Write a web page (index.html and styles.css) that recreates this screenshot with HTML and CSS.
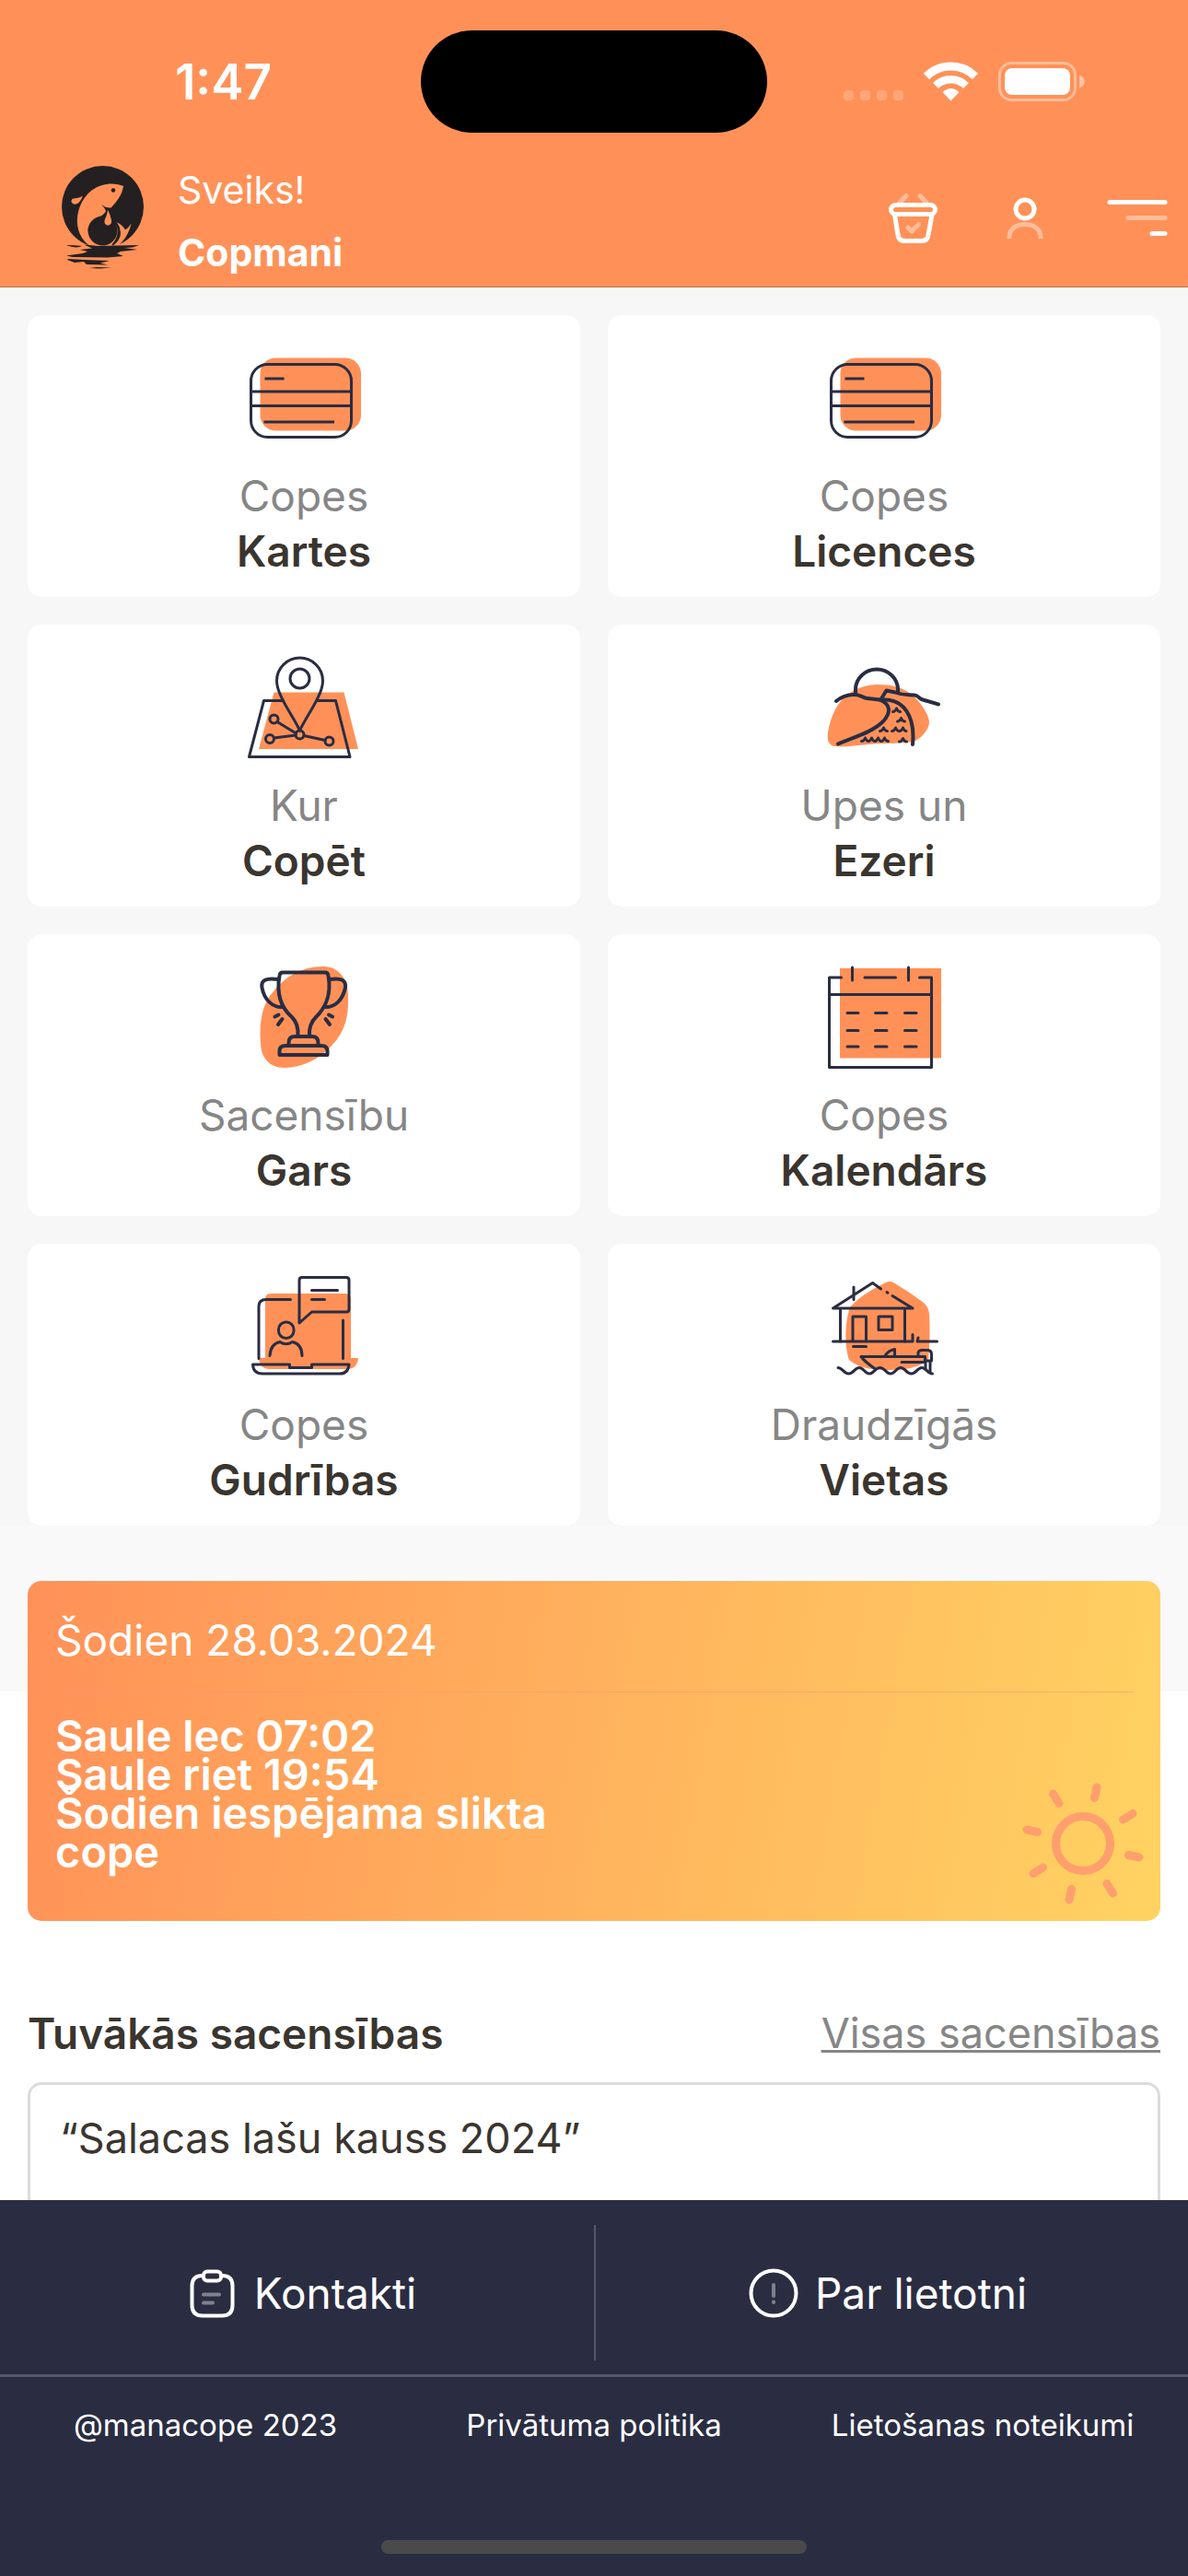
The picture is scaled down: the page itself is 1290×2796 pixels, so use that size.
FILE: index.html
```
<!DOCTYPE html>
<html lang="lv">
<head>
  <meta charset="UTF-8">
  <meta name="viewport" content="width=device-width, initial-scale=1.0">
  <title>Mana Cope</title>
  <link rel="stylesheet" href="styles.css">
</head>
<body>
  <header class="header">
    <div class="status">
      <span class="time">1:47</span>
      <div class="island"></div>
      <svg class="status-icons" viewBox="0 0 262 44" aria-hidden="true">
        <g fill="#fff" opacity=".2">
          <rect x="0" y="31" width="11" height="11" rx="4"/>
          <rect x="18" y="31" width="11" height="11" rx="4"/>
          <rect x="36" y="31" width="11" height="11" rx="4"/>
          <rect x="54" y="31" width="11" height="11" rx="4"/>
        </g>
        <g fill="none" stroke="#fff">
          <path stroke-width="9" d="M90 16A37.500 37.500 0 0 1 143 16"/>
          <path stroke-width="8.500" d="M100 26A23.500 23.500 0 0 1 133 26"/>
        </g>
        <path fill="#fff" d="M116.500 42.500L107.500 33Q116.500 25 125.500 33Z"/>
        <rect x="169.500" y="1.500" width="82" height="40" rx="13" fill="none" stroke="#fff" stroke-width="3" opacity=".4"/>
        <rect x="175" y="7" width="71" height="29" rx="8" fill="#fff"/>
        <path fill="#fff" opacity=".45" d="M256 14.500Q262 17 262 21.500T256 28.500Z"/>
      </svg>
    </div>
    <nav class="nav">
      <svg class="logo" viewBox="0 0 90 112" aria-hidden="true">
        <circle cx="44.500" cy="44.500" r="44.500" fill="#242021"/>
        <path fill="#ff9158" d="M0 86.500H90V90H0Z"/>
        <path fill="#ff9158" d="M67 22C58 18 44 18 32 27C20 37 16 52 17 63C18 74 24 83 31 87H60C66 84 73 74 75.500 62.500Q73 67 69 69.500Q65 63 59.700 61.500C65 68 65 80 54 86C64 75 61 65 57 62C50 50 30 60 28 70C29 60 45 56 48 49Q47 46 43 42Q48 46 53.500 45.500C59 40 66 31 67 22Z"/>
        <circle cx="44.500" cy="70.500" r="16" fill="#242021"/>
        <path fill="#242021" d="M49 50C48 58 30 60 28.500 71L60 71C60 63 55 57 49 50Z"/>
        <path fill="none" stroke="#242021" stroke-width="1.500" d="M60 63C66 72 63 81 55 86"/>
        <path fill="#ff9158" d="M50 48Q49 54 47 58C44 66 55 67 54 59Q53 53 50 48Z"/>
        <path fill="#ff9158" d="M22.700 32.500C18 37 10 33 10.500 39C13 44 20 42 22.700 32.500Z"/>
        <circle cx="56" cy="26.500" r="2.300" fill="#242021"/>
        <g fill="#242021">
          <path d="M5 86Q13 86 22 87Q17 90 6 86.500Z"/>
          <path d="M24 85.500L40 87L84 86L77 88.500L68 89L82 91L64 93L60 95L67 98L50 99.500L12 99L5 97.500L23 95L28 93L20 91L33 89.500Z"/>
          <path d="M7 101L25 102L52 103L42 105.500L50 107.500L27 107L24 104L14 105L6 102Z"/>
          <path d="M30 111L38 110L54 110.500L42 111.500Z"/>
        </g>
      </svg>
      <div class="greeting">
        <span>Sveiks!</span>
        <strong>Copmani</strong>
      </div>
      <div class="actions">
        <button type="button" aria-label="Grozs">
          <svg viewBox="0 0 66 66">
            <path class="faint" d="M18 17L26 8.500M49 17L41 8.500M28 43L32 47L39.500 39.500"/>
            <rect x="9.500" y="18.500" width="48" height="10" rx="5"/>
            <path d="M13.500 29L17 51Q18 57.500 24 57.500H43Q49 57.500 50 51L54 29"/>
          </svg>
        </button>
        <button type="button" aria-label="Profils">
          <svg viewBox="0 0 66 66">
            <circle cx="33" cy="23" r="10"/>
            <path class="faint flat" d="M16 55V53C16 45 23 39.500 33 39.500S50 45 50 53V55"/>
          </svg>
        </button>
        <button type="button" aria-label="Izvēlne">
          <svg viewBox="0 0 66 66">
            <path d="M3 15.500H63M49 49.500H63"/>
            <path class="faint" d="M23 32.500H63"/>
          </svg>
        </button>
      </div>
    </nav>
  </header>

  <main class="content">
    <section class="menu">
      <a class="card" href="#">
        <svg viewBox="0 0 126 120">
          <rect class="fill" x="15.500" y="16.500" width="109.500" height="79" rx="17"/>
          <rect x="5.500" y="23.500" width="109" height="79" rx="18"/>
          <path class="flat" d="M20.500 39H41.500M5.500 53H114M5.500 68.500H114M19.500 86H96"/>
        </svg>
        <span>Copes</span>
        <strong>Kartes</strong>
      </a>
      <a class="card" href="#">
        <svg viewBox="0 0 126 120">
          <rect class="fill" x="15.500" y="16.500" width="109.500" height="79" rx="17"/>
          <rect x="5.500" y="23.500" width="109" height="79" rx="18"/>
          <path class="flat" d="M20.500 39H41.500M5.500 53H114M5.500 68.500H114M19.500 86H96"/>
        </svg>
        <span>Copes</span>
        <strong>Licences</strong>
      </a>
      <a class="card" href="#">
        <svg viewBox="0 0 126 120">
          <path class="fill" d="M30.500 43.500H106.500L122 105H14Z"/>
          <path d="M40.500 52.500H19.500L3.500 113.500H113L97.500 52.500H77"/>
          <path d="M58.500 85C52 70 33.500 47 33.500 31A25 25 0 0 1 83.500 31C83.500 47 65 70 58.500 85Z"/>
          <circle cx="58.500" cy="28.500" r="10.500"/>
          <circle cx="30.500" cy="72.500" r="4.500"/>
          <circle cx="26" cy="94" r="4.500"/>
          <circle cx="58.500" cy="89.500" r="4.500"/>
          <circle cx="90.500" cy="96.500" r="4.500"/>
          <path d="M34 75.500L54.500 88M30.500 93L54 90M63 90.500L86 95.500"/>
        </svg>
        <span>Kur</span>
        <strong>Copēt</strong>
      </a>
      <a class="card" href="#">
        <svg viewBox="0 0 126 120">
          <path class="fill" d="M56 35C72 35 82 38 92 45C102 53 112 68 112 76C112 84 103 93 98 95.500C88 100 60 98 45 100C30 101.500 12 104 6 101C-1 97 2 85 5 74C9 62 14 54 22 47C32 39 44 35 56 35Z"/>
          <g stroke-width="4">
            <path d="M32 44V40.500A23 22 0 0 1 78 40.500V43"/>
            <path d="M11 53C18 47 26 45.500 32 46C38 46.500 40 49.500 45 50L58 51.500C70 56 71 65 62 75C50 87 30 92 13 99.500"/>
            <path d="M58 51.500C85 49 97 70 94 100M60.500 49.500L65.500 41.500L75 43.500C84 47 88 46 96 46.500C101 47 100 50 105 51.500L122 56.500"/>
          </g>
          <path d="M72.500 64.500Q75 64.500 76.500 61Q78 64.500 80.500 64.500M77.500 75Q80 75 81.500 71.500Q83 75 85.500 75M58.500 85.500Q61 85.500 62.500 82Q64 85.500 66.500 85.500M71.500 85.500Q74 85.500 75.500 82Q77 85.500 79.500 85.500Q82 85.500 83.500 82Q85 85.500 87 85.500M38.500 96.500Q41 96.500 42.500 93Q44 96.500 46 96.500Q48 96.500 49.500 93Q51 96.500 53 96.500Q55 96.500 56.500 93Q58 96.500 60 96.500Q62 96.500 63.500 93Q65 96.500 67.500 96.500M79.500 97Q82 97 83.500 93.500Q85 97 87.500 97"/>
        </svg>
        <span>Upes un</span>
        <strong>Ezeri</strong>
      </a>
      <a class="card" href="#">
        <svg viewBox="0 0 126 120">
          <path class="fill" d="M84 5C102 5 111 20 111 37C112 60 107 76 94 90C80 106 60 115 42 115C26 115 16 104 16 88C14 62 19 44 30 32C42 17 60 5 84 5Z"/>
          <g stroke-width="4">
            <path d="M40 11.500H86Q89 11.500 89.500 15C94 40 83 53 76 60C70 66 68.500 72 69 80M40 11.500Q37 11.500 36.500 15C32 40 42 53 50 60C56 66 57 72 56.500 80"/>
            <path d="M35 19C22 17 16 20 17.500 28C20 42 30 50 40 49M90.500 19C104 17 109 20 108 28C105 42 96 50 85 49"/>
            <path d="M46.500 90V88Q46.500 81 53 81H72Q78.500 81 78.500 88V90M36.500 101V97Q36.500 91 43 91H82Q88.500 91 88.500 97V101Z"/>
            <path d="M31.500 59.500L35.500 57.500M35 68L39.500 62M94 59.500L90 57.500M91 68L86.500 62"/>
          </g>
        </svg>
        <span>Sacensību</span>
        <strong>Gars</strong>
      </a>
      <a class="card" href="#">
        <svg viewBox="0 0 126 120">
          <path class="fill" d="M15 7H125V104.500H15Z"/>
          <path d="M16.500 17H3.500V114.500H114.500V17H101.500M42 17H75.500M28.500 6V20M89.500 6V20M3.500 35.500H114.500"/>
          <path d="M23 55.500H35M53.500 55.500H66M85.500 55.500H98M23 74.500H35M53.500 74.500H66M85.500 74.500H98M23 92H35M53.500 92H66M85.500 92H98"/>
        </svg>
        <span>Copes</span>
        <strong>Kalendārs</strong>
      </a>
      <a class="card" href="#">
        <svg viewBox="0 0 126 120">
          <path class="fill" d="M27 24H108Q114 24 114 30V94H122Q121 106 110 106H26Q15 106 14 94H21V30Q21 24 27 24Z"/>
          <path d="M14 94.500V38Q14 30.500 22 30.500H48.500M105.500 53V94.500"/>
          <path d="M7.500 101H47.500V104.500H71.500V101H112Q111 111 102 111H18Q8 111 7.500 101Z"/>
          <path d="M58 56V9.500Q58 6.500 61 6.500H109Q112 6.500 112 9.500V41Q112 44 109 44H71.500ZM71.500 20.500H99.500M71.500 30.500H85.500"/>
          <rect x="35.500" y="55" width="16.500" height="17.500" rx="8"/>
          <path d="M26 91.500C26.500 83 30 78 37 76.500Q43.500 81 50.500 76.500C57 78 61 83 61 91.500"/>
        </svg>
        <span>Copes</span>
        <strong>Gudrības</strong>
      </a>
      <a class="card" href="#">
        <svg viewBox="0 0 126 120">
          <path class="fill" d="M65 12Q69.500 10 74 12.500Q90 22 106 34Q111 38 112 46Q113.500 70 111 96C102 104 86 107 69 107C51 107 35 105 25 96C20 82 20 56 26 39C36 27 51 19 65 12Z"/>
          <path d="M59.500 19L50.500 12.500L7.500 40H94L72 26.500M66 22.500L67 23.200M30 17V30.500M15.500 40V76M85.500 40V76"/>
          <path d="M7.500 76H94V68.500M100 72L99 76H120.500M29 76V49H43.500V76M29.500 81.500H43.500M57 49H72V63.500H57Z"/>
          <path d="M53.500 106Q42 98 38 92.500H107.500V98.500H82M64 91.500Q68 85.500 74.500 84.500V92M100 91V88Q101 85.500 104 85.500H111Q114.500 86 114.500 90V97H107.500M108 98V106M113 98V109"/>
          <path d="M13 104.500C18 104.500 19 111 24.500 111S31 104.500 36 104.500S42 111 47 111S53 104.500 58.500 104.500S65 111 70 111S76 104.500 81 104.500S87 111 92.500 111S99 104.500 104 104.500S110 111 115.500 111"/>
        </svg>
        <span>Draudzīgās</span>
        <strong>Vietas</strong>
      </a>
    </section>

    <section class="today">
      <div class="weather">
        <p class="date">Šodien 28.03.2024</p>
        <p class="forecast">Saule lec 07:02<br>Saule riet 19:54<br>Šodien iespējama slikta cope</p>
        <svg class="sun" viewBox="-66 -66 132 132" aria-hidden="true">
          <circle r="29.500"/>
          <path d="M15 -61L12.500 -49.500M-15 61L-12.500 49.500M61 15L49.500 12.500M-61 -15L-49.500 -12.500"/>
          <path d="M54 -32.500L43.500 -26M-54 32.500L-43.500 26M32.500 54L26 43.500M-32.500 -54L-26 -43.500"/>
        </svg>
      </div>
    </section>

    <section class="events">
      <div class="events-head">
        <h2>Tuvākās sacensības</h2>
        <a href="#">Visas sacensības</a>
      </div>
      <article class="event">“Salacas lašu kauss 2024”</article>
    </section>
  </main>

  <footer class="footer">
    <div class="footer-main">
      <a href="#">
        <svg viewBox="0 0 60 60">
          <path d="M20 11H19Q7.500 11 7.500 22V43Q7.500 54.500 19 54.500H40Q51.500 54.500 51.500 43V22Q51.500 11 40 11H39"/>
          <rect x="20" y="6.500" width="19" height="10" rx="4"/>
          <path class="faint" d="M20 31.500H37M20 40.500H30"/>
        </svg>
        Kontakti
      </a>
      <a href="#">
        <svg viewBox="0 0 60 60">
          <circle cx="30" cy="30" r="24.500"/>
          <path class="faint" d="M30 21V33M30 39.500V40"/>
        </svg>
        Par lietotni
      </a>
    </div>
    <div class="footer-links">
      <span>@manacope 2023</span>
      <a href="#">Privātuma politika</a>
      <a href="#">Lietošanas noteikumi</a>
    </div>
    <div class="home-bar"></div>
  </footer>
</body>
</html>
```
FILE: styles.css
```
* {
  box-sizing: border-box;
}
body {
  display: flex;
  flex-direction: column;
  height: 100vh;
  margin: 0;
  font-family: Inter, "Liberation Sans", sans-serif;
  font-size: 46px;
  line-height: 60px;
  color: #3a352f;
  background-color: #fff;
}
a {
  color: inherit;
  text-decoration: none;
}
svg {
  display: block;
  flex: none;
}

/* Header */
.header {
  flex: none;
  padding: 33px 0 3px;
  color: #fff;
  background-color: #ff9158;
  border-bottom: 1px solid #c0714a;
}
.status {
  display: grid;
  grid-template-columns: 1fr 376px 1fr;
  align-items: center;
  margin-bottom: 28px;
}
.time {
  padding-left: 28px;
  text-align: center;
  font-size: 53px;
  font-weight: 600;
}
.island {
  height: 111px;
  border-radius: 56px;
  background-color: #000;
}
.status-icons {
  justify-self: end;
  width: 262px;
  height: 44px;
  margin-right: 112px;
}
.nav {
  display: flex;
  align-items: center;
  padding: 0 22px 0 67px;
}
.logo {
  width: 90px;
  height: 112px;
  margin: 0 36px 8px 0;
}
.greeting {
  display: flex;
  flex-direction: column;
  font-size: 41px;
  line-height: 68px;
}
.actions {
  display: flex;
  gap: 56px;
  margin: 0 0 6px auto;
}
.actions button {
  padding: 0;
  border: none;
  background: none;
  cursor: pointer;
}
.actions svg {
  width: 66px;
  height: 66px;
  fill: none;
  stroke: #fff;
  stroke-width: 5;
  stroke-linecap: round;
  stroke-linejoin: round;
}
.faint {
  opacity: 0.4;
}
.actions .flat,
.card .flat {
  stroke-linecap: butt;
}

/* Content */
.content {
  flex: 1;
  min-height: 0;
  overflow: hidden;
}
.menu {
  display: grid;
  grid-template-columns: 1fr 1fr;
  gap: 30px;
  padding: 30px 30px 0;
  background-color: #f7f7f7;
}
.card {
  display: flex;
  flex-direction: column;
  align-items: center;
  padding: 30px 0 20px;
  border-radius: 15px;
  background-color: #fff;
}
.card svg {
  width: 126px;
  height: 120px;
  margin-bottom: 16px;
  fill: none;
  stroke: #2a2d42;
  stroke-width: 3;
  stroke-linecap: round;
  stroke-linejoin: round;
}
.card .fill {
  fill: #ff9158;
  stroke: none;
}
.card span {
  color: #868686;
}
.card strong {
  font-weight: 600;
}

.today {
  padding: 60px 30px 0;
  background: linear-gradient(#f9f9f9 180px, #fff 180px);
}
.weather {
  position: relative;
  padding: 0 30px 54px;
  border-radius: 15px;
  color: #fff;
  background: linear-gradient(100deg, #ff9158, #ffd362);
}
.date {
  margin: 0;
  padding: 34px 0 26px;
  border-bottom: 1px solid rgba(255, 145, 120, 0.6);
}
.forecast {
  width: 50%;
  margin: 0;
  padding-top: 26px;
  font-size: 47px;
  font-weight: 600;
  line-height: 42px;
}
.sun {
  position: absolute;
  right: 18px;
  bottom: 18px;
  width: 132px;
  height: 132px;
  fill: none;
  stroke: #ff9f6e;
  stroke-width: 9;
  stroke-linecap: round;
}

.events {
  padding: 92px 30px 0;
  font-size: 45px;
}
.events-head {
  display: flex;
  justify-content: space-between;
  margin-bottom: 23px;
}
.events-head h2 {
  margin: 0;
  font-size: 46px;
  font-weight: 600;
}
.events-head a {
  color: #868686;
  text-decoration: underline;
  text-decoration-thickness: 3px;
}
.event {
  min-height: 300px;
  padding: 28px 32px;
  border: 3px solid #dcdcdc;
  border-radius: 15px;
}

/* Footer */
.footer {
  flex: none;
  padding-bottom: 24px;
  color: #fff;
  background-color: #2a2d42;
}
.footer-main {
  display: grid;
  grid-template-columns: 1fr 1fr;
  padding: 27px 0 15px;
  border-bottom: 3px solid #55576e;
}
.footer-main a {
  display: flex;
  align-items: center;
  justify-content: center;
  gap: 15px;
  height: 147px;
  padding-left: 8px;
}
.footer-main a + a {
  padding: 0 12px 0 0;
  border-left: 2px solid #55576e;
}
.footer-main svg {
  width: 60px;
  height: 60px;
  fill: none;
  stroke: #fff;
  stroke-width: 4;
  stroke-linecap: round;
  stroke-linejoin: round;
}
.footer-links {
  display: grid;
  grid-template-columns: repeat(3, 1fr);
  padding: 32px 12px 0;
  text-align: center;
  font-size: 33px;
  line-height: 40px;
}
.home-bar {
  width: 462px;
  height: 15px;
  margin: 105px auto 0;
  border-radius: 8px;
  background-color: #4a4a4a;
}
```
